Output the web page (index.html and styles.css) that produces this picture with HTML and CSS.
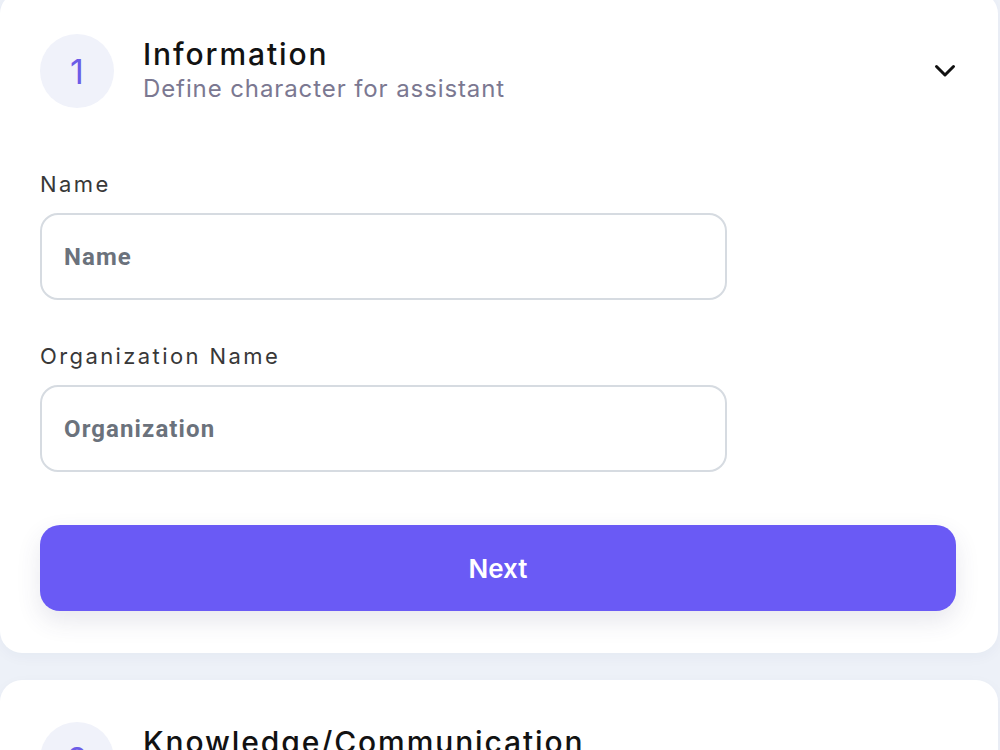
FILE: index.html
```html
<!DOCTYPE html>
<html lang="en">
<head>
  <meta charset="UTF-8">
  <meta name="viewport" content="width=device-width, initial-scale=1.0">
  <title>Assistant Setup</title>
  <link rel="stylesheet" href="styles.css">
</head>
<body>

  <div class="steps">
    <section class="step-card open">
      <div class="step-header">
        <div class="step-number">1</div>
        <div class="step-text">
          <h2>Information</h2>
          <p>Define character for assistant</p>
        </div>
        <svg class="chevron" width="22" height="14" viewBox="0 0 22 14">
          <path d="M2.5 2.5 L11 11 L19.5 2.5" fill="none" stroke="#111" stroke-width="3" stroke-linecap="round" stroke-linejoin="round"/>
        </svg>
      </div>

      <form class="step-form" id="info-form">
        <label for="name">Name</label>
        <input type="text" id="name" placeholder="Name">

        <label for="organization">Organization Name</label>
        <input type="text" id="organization" placeholder="Organization">

        <button type="submit" class="next-btn">Next</button>
      </form>
    </section>

    <section class="step-card">
      <div class="step-header">
        <div class="step-number">2</div>
        <div class="step-text">
          <h2>Knowledge/Communication</h2>
          <p>Set knowledge and tone for assistant</p>
        </div>
        <svg class="chevron" width="22" height="14" viewBox="0 0 22 14">
          <path d="M2.5 2.5 L11 11 L19.5 2.5" fill="none" stroke="#111" stroke-width="3" stroke-linecap="round" stroke-linejoin="round"/>
        </svg>
      </div>
    </section>
  </div>

</body>
</html>
```

FILE: styles.css
```css
body {
  margin: 0;
  background-color: #edf1f8;
  font-family: Inter, "Open Sans", sans-serif;
  overflow: hidden;
}

.steps {
  display: flex;
  flex-direction: column;
  gap: 27px;
  margin-top: -8px;
  padding-right: 2px;
}

.step-card {
  background-color: #fff;
  border-radius: 22px;
  padding: 42px 42px 42px 40px;
  box-shadow: 0 4px 14px rgba(30, 40, 90, 0.04);
}

.step-header {
  display: flex;
  align-items: center;
  gap: 29px;
}

.step-number {
  width: 74px;
  height: 74px;
  border-radius: 50%;
  background-color: #f0f2fa;
  color: #6c5ce7;
  font-size: 34px;
  font-weight: 400;
  display: flex;
  align-items: center;
  justify-content: center;
  flex-shrink: 0;
}

.step-text {
  flex: 1;
}

.step-text h2 {
  margin: 0;
  font-size: 30px;
  line-height: 36px;
  font-weight: 500;
  letter-spacing: 1.9px;
  color: #121212;
}

.step-text p {
  margin: 0;
  font-size: 24px;
  line-height: 34px;
  letter-spacing: 0.9px;
  color: #7b7891;
}

.chevron {
  flex-shrink: 0;
}

.step-form {
  display: flex;
  flex-direction: column;
  padding-top: 61px;
}

.step-form label {
  font-size: 22px;
  line-height: 30px;
  letter-spacing: 2.4px;
  color: #383838;
  margin-bottom: 14px;
}

.step-form input {
  box-sizing: border-box;
  width: 687px;
  height: 87px;
  padding: 0 22px;
  border: 2px solid #d6dbe1;
  border-radius: 18px;
  font-family: Roboto, sans-serif;
  font-size: 24px;
  font-weight: 700;
  letter-spacing: 1.1px;
  color: #3a3f47;
  margin-bottom: 41px;
  outline: none;
}

.step-form input::placeholder {
  color: #6b727c;
}

.next-btn {
  margin-top: 12px;
  height: 86px;
  border: none;
  border-radius: 20px;
  background-color: #6a5af5;
  color: #fff;
  font-family: Inter, sans-serif;
  font-size: 26px;
  font-weight: 600;
  cursor: pointer;
  box-shadow: 0 10px 24px rgba(60, 60, 110, 0.12);
}

.next-btn:hover {
  background-color: #5b4be6;
}
```
